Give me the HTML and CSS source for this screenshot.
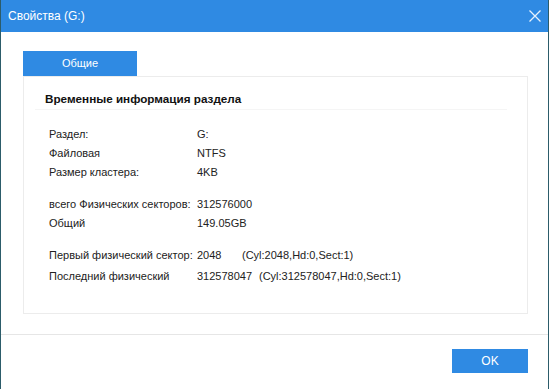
FILE: index.html
```html
<!DOCTYPE html>
<html lang="ru">
<head>
    <meta charset="UTF-8">
    <meta name="viewport" content="width=device-width, initial-scale=1.0">
    <title>Свойства (G:)</title>
    <link rel="stylesheet" href="styles.css">
</head>
<body>
    <div class="window">
        <!-- Title bar -->
        <div class="titlebar">
            <span class="title">Свойства (G:)</span>
            <button class="close" aria-label="Закрыть">
                <svg width="12" height="12" viewBox="0 0 12 12">
                    <path d="M0.5 0.5 L11.5 11.5 M11.5 0.5 L0.5 11.5" stroke="#e6f1fc" stroke-width="1.3" fill="none"/>
                </svg>
            </button>
        </div>

        <div class="content">
            <div class="tab">Общие</div>
            <div class="panel">
                <h3 class="heading">Временные информация раздела</h3>

                <div class="group">
                    <div class="row"><span class="label">Раздел:</span><span class="value">G:</span></div>
                    <div class="row"><span class="label">Файловая</span><span class="value">NTFS</span></div>
                    <div class="row"><span class="label">Размер кластера:</span><span class="value">4KB</span></div>
                </div>

                <div class="group">
                    <div class="row"><span class="label">всего Физических секторов:</span><span class="value">312576000</span></div>
                    <div class="row"><span class="label">Общий</span><span class="value">149.05GB</span></div>
                </div>

                <div class="group">
                    <div class="row"><span class="label">Первый физический сектор:</span><span class="value"><span class="num-short">2048</span>(Cyl:2048,Hd:0,Sect:1)</span></div>
                    <div class="row tall"><span class="label">Последний физический</span><span class="value"><span class="num-long">312578047</span>(Cyl:312578047,Hd:0,Sect:1)</span></div>
                </div>
            </div>
        </div>

        <div class="footer">
            <button class="button">OK</button>
        </div>
    </div>
</body>
</html>
```

FILE: styles.css
```css
/* Dialog window */
body {
    margin: 0;
    background: #fff;
    font-family: "Liberation Sans", Arial, sans-serif;
    font-size: 11px;
    color: #222;
}
.window {
    width: 549px;
    height: 389px;
    box-sizing: border-box;
    border-left: 1px solid #2c5c6a;
    border-right: 1px solid #2c5c6a;
    background: #fff;
}
.titlebar {
    height: 32px;
    background: #2f8ae3;
    display: flex;
    align-items: center;
    justify-content: space-between;
    padding: 0 7px 0 7px;
}
.title {
    color: #fff;
    font-size: 12px;
}
.close {
    border: 0;
    background: none;
    padding: 0;
    width: 12px;
    height: 12px;
    display: flex;
}
.content {
    padding: 19px 20px 0 22px;
}
.tab {
    width: 114px;
    height: 25px;
    line-height: 25px;
    background: #2f8ae3;
    color: #fff;
    text-align: center;
}
.panel {
    box-sizing: border-box;
    height: 238px;
    border: 1px solid #ececec;
    padding: 14px 0 0 21px;
}
.heading {
    margin: 0 20px 14px -10px;
    padding: 0 0 2px 10px;
    font-size: 11.7px;
    font-weight: bold;
    line-height: 16px;
    color: #111;
    border-bottom: 1px solid #f5f5f5;
}
.group {
    margin-bottom: 13px;
    padding-left: 4px;
}
.row {
    display: flex;
    height: 19px;
    align-items: center;
    white-space: nowrap;
}
.row.tall {
    height: 23px;
}
.label {
    width: 148px;
    flex-shrink: 0;
}
.num-short {
    display: inline-block;
    width: 45px;
}
.num-long {
    display: inline-block;
    width: 62px;
}
.footer {
    margin-top: 20px;
    border-top: 1px solid #e6e6e6;
    display: flex;
    justify-content: flex-end;
    padding: 14px 20px 0 0;
}
.button {
    width: 76px;
    height: 24px;
    border: 0;
    background: #2f8ae3;
    color: #fff;
    font-family: "Liberation Sans", Arial, sans-serif;
    font-size: 12px;
}
```
